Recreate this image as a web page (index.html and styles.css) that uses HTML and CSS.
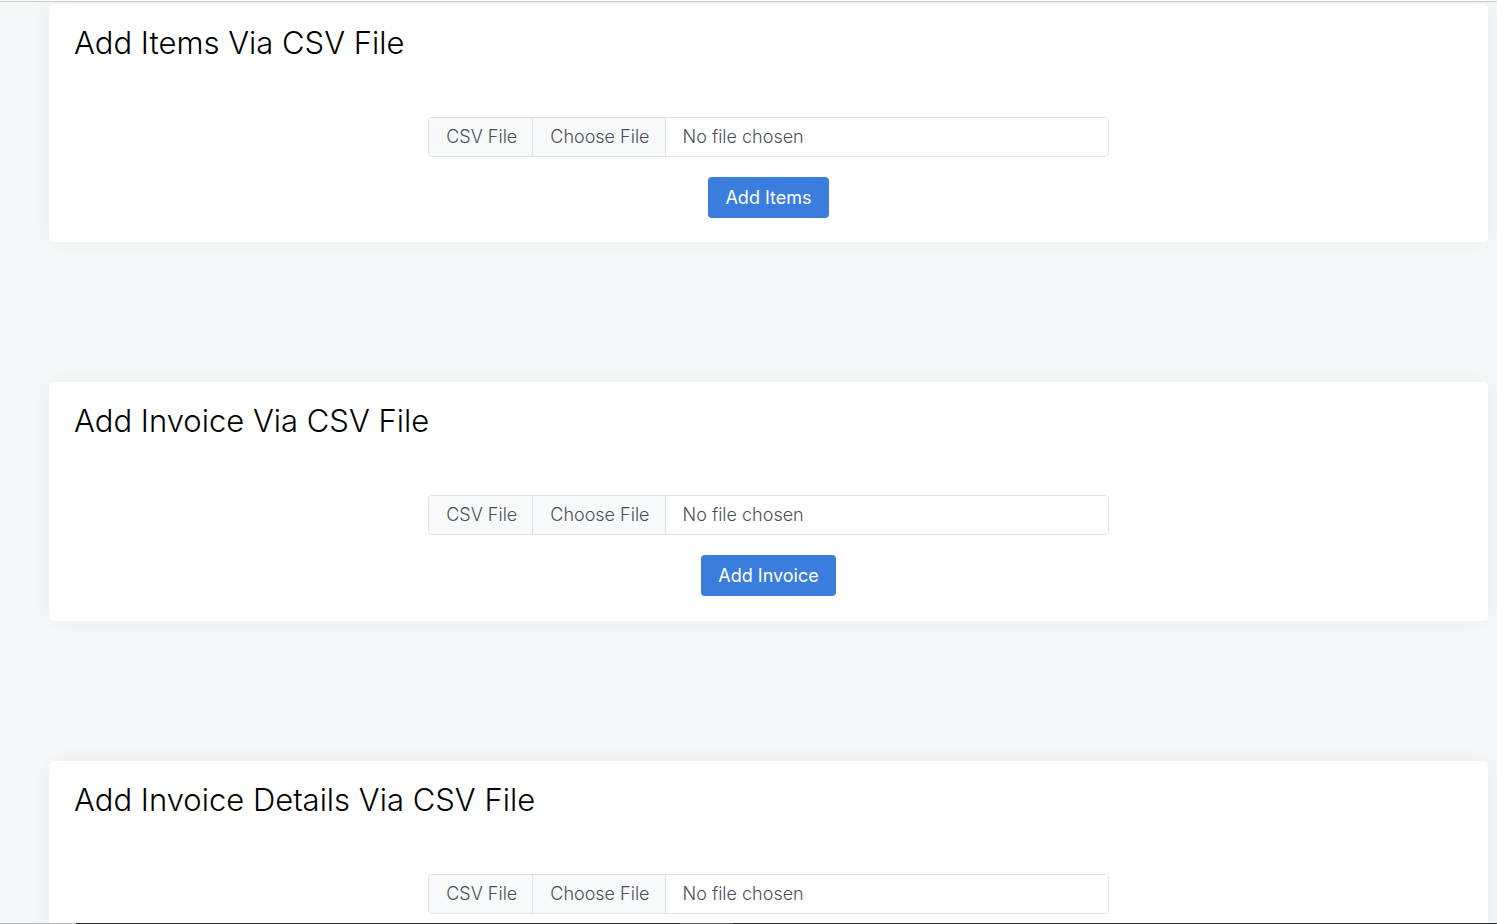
FILE: index.html
```html
<!DOCTYPE html>
<html lang="en">
<head>
<meta charset="utf-8">
<meta name="viewport" content="width=device-width, initial-scale=1">
<title>CSV Import</title>
<link rel="stylesheet" href="styles.css">
</head>
<body>
<div class="topline"></div>
<main class="page">
  <section class="card">
    <h2 class="card-title">Add Items Via CSV File</h2>
    <form class="upload">
      <div class="input-group">
        <label class="input-label" for="items-file">CSV File</label>
        <input class="file-input" type="file" id="items-file" accept=".csv">
      </div>
      <button class="btn" type="submit">Add Items</button>
    </form>
  </section>
  <section class="card">
    <h2 class="card-title">Add Invoice Via CSV File</h2>
    <form class="upload">
      <div class="input-group">
        <label class="input-label" for="invoice-file">CSV File</label>
        <input class="file-input" type="file" id="invoice-file" accept=".csv">
      </div>
      <button class="btn" type="submit">Add Invoice</button>
    </form>
  </section>
  <section class="card">
    <h2 class="card-title">Add Invoice Details Via CSV File</h2>
    <form class="upload">
      <div class="input-group">
        <label class="input-label" for="details-file">CSV File</label>
        <input class="file-input" type="file" id="details-file" accept=".csv">
      </div>
    </form>
  </section>
</main>
<div class="bottomline"></div>
</body>
</html>
```

FILE: styles.css
```css
*, *::before, *::after {
  box-sizing: border-box;
}

body {
  margin: 0;
  height: 100vh;
  overflow: hidden;
  display: flex;
  flex-direction: column;
  background: #f5f7fb;
  color: #495057;
  font-family: Inter, "Liberation Sans", sans-serif;
  font-size: 18px;
  font-weight: 300;
  line-height: 26px;
}

.topline {
  flex: none;
  height: 2px;
  background: #fff;
  border-bottom: 1px solid #c8cacc;
}

.page {
  flex: 1;
  min-height: 0;
  overflow: hidden;
  display: flex;
  flex-direction: column;
  gap: 140px;
  padding: 2px 9px 0 49px;
}

.card {
  flex: none;
  padding: 20px 25px 24px;
  background: #fff;
  border-radius: 5px;
  box-shadow: 0 0 28px rgba(33, 37, 41, 0.05);
}

.card-title {
  margin: 0 0 56px;
  color: #000;
  font-size: 31px;
  font-weight: 300;
  line-height: 37px;
}

.upload {
  display: flex;
  flex-direction: column;
  align-items: center;
  gap: 20px;
}

.input-group {
  display: flex;
  width: 49%;
  height: 40px;
  border: 1px solid #dee2e6;
  border-radius: 4px;
  overflow: hidden;
}

.input-label {
  flex: none;
  padding: 6px 15px 6px 17px;
  background: #f8f9fb;
  border-right: 1px solid #dee2e6;
}

.file-input {
  flex: 1;
  min-width: 0;
  height: 38px;
  color: inherit;
  background: #fff;
  font: inherit;
}

.file-input::file-selector-button {
  height: 38px;
  margin: 0 17px 0 0;
  padding: 6px 15px 6px 17px;
  color: inherit;
  background: #f8f9fb;
  border: 0;
  border-right: 1px solid #dee2e6;
  font: inherit;
}

.btn {
  padding: 7px 17px;
  color: #fff;
  background: #3b7ddd;
  border: 0;
  border-radius: 4px;
  font: inherit;
  font-weight: 400;
  line-height: 27px;
}

.card + .card {
  padding-bottom: 25px;
}

.bottomline {
  flex: none;
  height: 1px;
  background: linear-gradient(to right, #2b2c2e 42.5%, #5a5b5d 42.5% 46.2%, #2b2c2e 46.2%);
  border-left: 76px solid #b9babd;
}
```
